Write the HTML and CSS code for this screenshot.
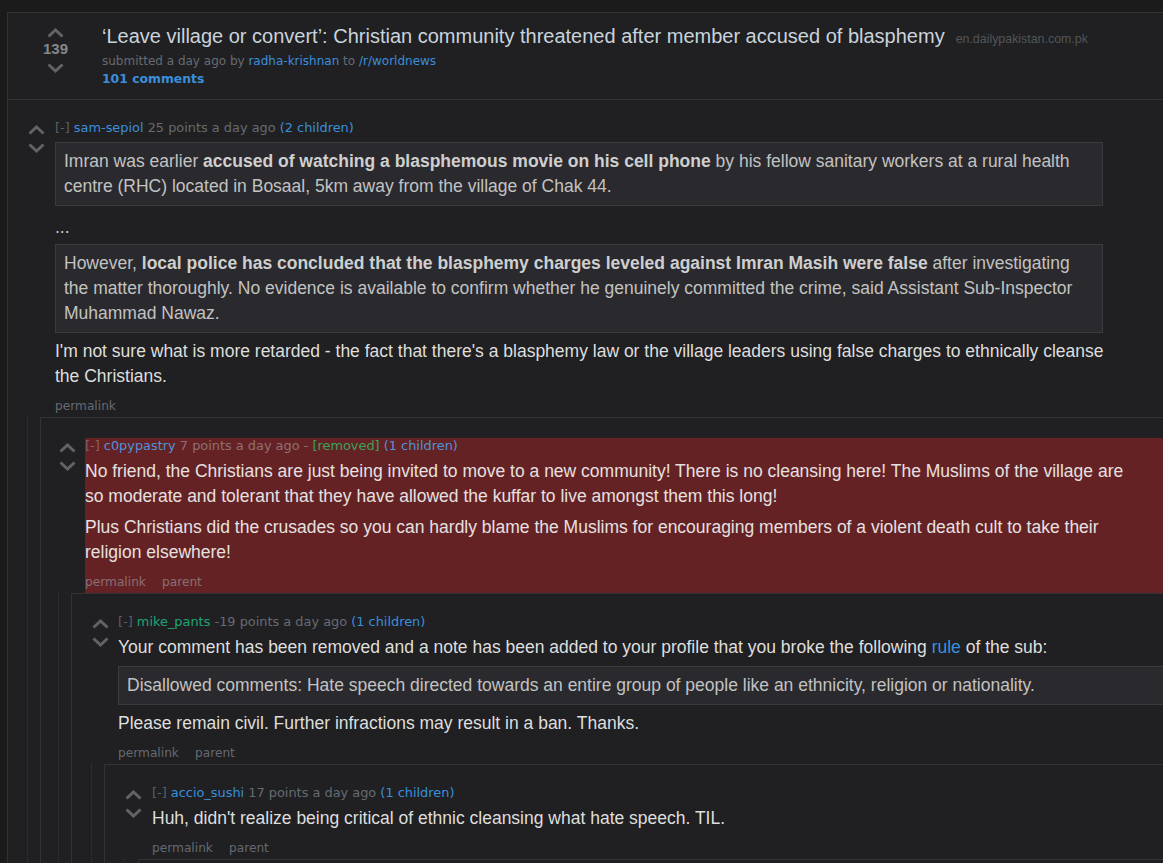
FILE: index.html
```html
<!DOCTYPE html>
<html lang="en">
<head>
<meta charset="utf-8">
<title>worldnews</title>
<link rel="stylesheet" href="styles.css">
</head>
<body>
<svg class="defs" width="0" height="0" aria-hidden="true">
  <defs>
    <symbol id="up" viewBox="0 0 19 10"><path d="M2.5 8.5 L9.5 2 L16.5 8.5" fill="none" stroke="currentColor" stroke-width="3"/></symbol>
    <symbol id="down" viewBox="0 0 19 10"><path d="M2.5 1.5 L9.5 8 L16.5 1.5" fill="none" stroke="currentColor" stroke-width="3"/></symbol>
  </defs>
</svg>

<div class="panel">
  <div class="link">
    <div class="link-votes">
      <svg class="arrow"><use href="#up"/></svg>
      <div class="link-score">139</div>
      <svg class="arrow arrow-down"><use href="#down"/></svg>
    </div>
    <div class="link-main">
      <p class="title"><a class="title-link">‘Leave village or convert’: Christian community threatened after member accused of blasphemy</a><span class="domain">en.dailypakistan.com.pk</span></p>
      <p class="link-tagline">submitted a day ago by <a class="blue">radha-krishnan</a> to <a class="blue">/r/worldnews</a></p>
      <a class="comments-link">101 comments</a>
    </div>
  </div>

  <div class="comment top">
    <div class="comment-row">
      <div class="votes">
        <svg class="arrow"><use href="#up"/></svg>
        <svg class="arrow arrow-down"><use href="#down"/></svg>
      </div>
      <div class="entry">
        <p class="tagline"><span class="expand">[-]</span> <a class="author">sam-sepiol</a> <span class="meta">25 points a day ago</span> <a class="kids">(2 children)</a></p>
        <div class="md">
          <blockquote class="first">Imran was earlier <strong>accused of watching a blasphemous movie on his cell phone</strong> by his fellow sanitary workers at a rural health centre (RHC) located in Bosaal, 5km away from the village of Chak 44.</blockquote>
          <p class="ellipsis">...</p>
          <blockquote>However, <strong>local police has concluded that the blasphemy charges leveled against Imran Masih were false</strong> after investigating the matter thoroughly. No evidence is available to confirm whether he genuinely committed the crime, said Assistant Sub-Inspector Muhammad Nawaz.</blockquote>
          <p class="bright">I'm not sure what is more retarded - the fact that there's a blasphemy law or the village leaders using false charges to ethnically cleanse the Christians.</p>
        </div>
        <ul class="buttons"><li>permalink</li></ul>
      </div>
    </div>

    <div class="child child-1">
      <div class="comment nested depth-1">
        <div class="comment-row">
          <div class="votes">
            <svg class="arrow"><use href="#up"/></svg>
            <svg class="arrow arrow-down"><use href="#down"/></svg>
          </div>
          <div class="entry removed">
            <p class="tagline"><span class="expand">[-]</span> <a class="author">c0pypastry</a> <span class="meta">7 points a day ago -</span> <span class="removed-tag">[removed]</span> <a class="kids">(1 children)</a></p>
            <div class="md">
              <p class="bright">No friend, the Christians are just being invited to move to a new community! There is no cleansing here! The Muslims of the village are so moderate and tolerant that they have allowed the kuffar to live amongst them this long!</p>
              <p class="bright">Plus Christians did the crusades so you can hardly blame the Muslims for encouraging members of a violent death cult to take their religion elsewhere!</p>
            </div>
            <ul class="buttons"><li>permalink</li><li>parent</li></ul>
          </div>
        </div>

        <div class="child child-2">
          <div class="comment nested depth-2">
            <div class="comment-row">
              <div class="votes">
                <svg class="arrow"><use href="#up"/></svg>
                <svg class="arrow arrow-down"><use href="#down"/></svg>
              </div>
              <div class="entry">
                <p class="tagline"><span class="expand">[-]</span> <a class="author mod">mike_pants</a> <span class="meta">-19 points a day ago</span> <a class="kids">(1 children)</a></p>
                <div class="md">
                  <p class="bright">Your comment has been removed and a note has been added to your profile that you broke the following <a class="blue">rule</a> of the sub:</p>
                  <blockquote>Disallowed comments: Hate speech directed towards an entire group of people like an ethnicity, religion or nationality.</blockquote>
                  <p class="bright">Please remain civil. Further infractions may result in a ban. Thanks.</p>
                </div>
                <ul class="buttons"><li>permalink</li><li>parent</li></ul>
              </div>
            </div>

            <div class="child child-3">
              <div class="comment nested depth-3">
                <div class="comment-row">
                  <div class="votes">
                    <svg class="arrow"><use href="#up"/></svg>
                    <svg class="arrow arrow-down"><use href="#down"/></svg>
                  </div>
                  <div class="entry">
                    <p class="tagline"><span class="expand">[-]</span> <a class="author">accio_sushi</a> <span class="meta">17 points a day ago</span> <a class="kids">(1 children)</a></p>
                    <div class="md">
                      <p class="bright">Huh, didn't realize being critical of ethnic cleansing what hate speech. TIL.</p>
                    </div>
                    <ul class="buttons"><li>permalink</li><li>parent</li></ul>
                  </div>
                </div>
                <div class="child child-4">
                  <div class="comment nested depth-4"></div>
                </div>
              </div>
            </div>
          </div>
        </div>
      </div>
    </div>
  </div>
</div>
</body>
</html>
```

FILE: styles.css
```css
html, body {
  margin: 0;
  padding: 0;
  background: #1b1b1c;
  overflow: hidden;
}

body {
  font-family: "Liberation Sans", Arial, sans-serif;
  color: #c8c8c8;
}

.defs {
  position: absolute;
  width: 0;
  height: 0;
}

a { text-decoration: none; }

p { margin: 0; }

.panel {
  margin: 12px 0 0 7px;
  width: 1300px;
  min-height: 900px;
  background: #202022;
  border: 1px solid #323235;
}

/* ---------- link header ---------- */
.link {
  display: flex;
  height: 86px;
  border-bottom: 1px solid #323235;
}

.link-votes {
  display: flex;
  flex-direction: column;
  align-items: center;
  width: 19px;
  margin-left: 38px;
  padding-top: 15px;
}

.arrow {
  display: block;
  width: 19px;
  height: 10px;
  color: #626365;
}

.link-score {
  margin: 3px 0 6px;
  font: bold 15px/16px "Liberation Sans", Arial, sans-serif;
  color: #878787;
}

.link-main {
  margin-left: 37px;
  padding-top: 11px;
}

.title {
  font-size: 20px;
  line-height: 24px;
  white-space: nowrap;
}

.title-link { color: #c9d3dc; }

.domain {
  margin-left: 11px;
  font-size: 12.4px;
  color: #50555b;
}

.link-tagline {
  margin-top: 3px;
  font: 12px/14px "DejaVu Sans", Verdana, sans-serif;
  color: #666b72;
}

.blue { color: #3a8fdc; }

.comments-link {
  display: block;
  margin-top: 4px;
  font: bold 12.4px/14px "DejaVu Sans", Verdana, sans-serif;
  color: #3a8fdc;
}

/* ---------- comments ---------- */
.comment.nested {
  border-left: 1px solid #323235;
  border-top: 1px solid #323235;
}

.comment.depth-4 { min-height: 40px; }

.comment-row {
  display: flex;
  padding-top: 20px;
}

.votes {
  flex: none;
  width: 19px;
  margin-left: 19px;
  padding-top: 5px;
}

.votes .arrow-down { margin-top: 8px; }

.entry {
  flex: 1;
  margin-left: 9px;
}

.depth-1 > .comment-row > .votes { margin-left: 17px; }
.depth-1 > .comment-row > .entry { margin-left: 8px; }
.depth-2 > .comment-row > .entry { margin-left: 8px; }

.entry.removed {
  background: #652224;
}

.tagline {
  font: 12.9px/16px "DejaVu Sans", Verdana, sans-serif;
  color: #666b72;
  white-space: nowrap;
}

.expand { color: #5a5f66; }
.author { color: #3a8fdc; }
.author.mod { color: #1fa374; }
.kids { color: #3a8fdc; }
.removed-tag { color: #3aa35c; }

.removed .expand { color: #8a5f66; }
.removed .meta { color: #8d7073; }
.removed .author, .removed .kids { color: #4d93d8; }

.md {
  max-width: 1052px;
  margin-top: 5px;
  display: flex;
  flex-direction: column;
  gap: 6px;
  font-size: 17.5px;
  line-height: 25px;
}

.md blockquote {
  margin: 0 4px 0 0;
  padding: 6px 8px;
  background: #2a2a2e;
  border: 1px solid #3b3b3f;
  color: #c2c2c2;
}

.md blockquote.first { margin-top: 1px; }

.md strong { color: #cfcfcf; }

.md .ellipsis {
  margin: 3px 0 -2px;
  color: #c8c8c8;
}

.md .bright { color: #dedede; }

.removed .md .bright { color: #e6e0e0; }

.buttons {
  display: flex;
  gap: 16px;
  margin: 9px 0 0;
  padding: 0 0 3px;
  list-style: none;
  font: 12.2px/16px "DejaVu Sans", Verdana, sans-serif;
  color: #646a71;
}

.removed .buttons { color: #8a6f73; }

.child {
  margin-left: 19px;
  padding-left: 12px;
  border-left: 1px dotted #38383b;
}

.child-2 { margin-left: 17px; }
.child-4 { padding-left: 13px; }
```
